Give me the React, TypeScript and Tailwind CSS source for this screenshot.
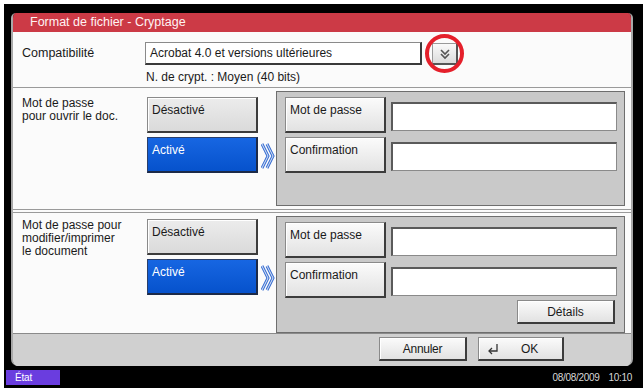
import React from "react";

const font = { fontFamily: '"Liberation Sans", Arial, sans-serif' };

function Btn3D({ label, className = "", center = false, blue = false }: { label: React.ReactNode; className?: string; center?: boolean; blue?: boolean }) {
  const base = blue
    ? "bg-linear-to-b from-[#1766e2] to-[#0652cc] text-white border border-[#2a3f6a] border-b-[2px] border-r-[2px] border-b-[#1c2a48] border-r-[#1c2a48]"
    : "bg-linear-to-b from-[#fbfbfb] to-[#e2e2e2] text-[#1a1a1a] border border-[#8a8a8a] border-b-[2px] border-r-[2px] border-b-[#3c3c3c] border-r-[#3c3c3c] shadow-[inset_1px_1px_0_#ffffff]";
  return (
    <div className={`${base} ${className} flex ${center ? "items-center justify-center" : "items-start pl-[4px] pt-[5px]"} text-[12px] leading-[14px]`}>
      {label}
    </div>
  );
}

function Input({ className = "" }: { className?: string }) {
  return <div className={`bg-white border border-[#8a8a8a] border-t-[2px] border-l-[2px] border-t-[#5a5a5a] border-l-[#5a5a5a] ${className}`} />;
}

function Chevrons() {
  return (
    <svg width="14" height="30" viewBox="0 0 14 30">
      <polyline points="1,3 7,15 1,27" fill="none" stroke="#3a6fd2" strokeWidth="3" />
      <polyline points="1,3 7,15 1,27" fill="none" stroke="#dbe6f8" strokeWidth="1" />
      <polyline points="6,3 12,15 6,27" fill="none" stroke="#3a6fd2" strokeWidth="3" />
      <polyline points="6,3 12,15 6,27" fill="none" stroke="#dbe6f8" strokeWidth="1" />
    </svg>
  );
}

function Section({ labelLines, children, panelH, buttonsTop }: { labelLines: string[]; children: React.ReactNode; panelH: string; buttonsTop: string }) {
  return (
    <div className="flex">
      <div className={`w-[134px] pl-[9px] ${buttonsTop} text-[12px] leading-[13px] text-[#1a1a1a]`}>
        {labelLines.map((l) => (
          <div key={l}>{l}</div>
        ))}
      </div>
      <div className={`w-[111px] flex flex-col gap-[4px] ${buttonsTop}`}>
        <Btn3D label="Désactivé" className="h-[36px] !from-[#ececec] !to-[#dadada]" />
        <Btn3D label="Activé" blue className="h-[36px]" />
      </div>
      <div className={`w-[18px] flex justify-center ${buttonsTop}`}>
        <div className="mt-[44px] ml-[2px]">
          <Chevrons />
        </div>
      </div>
      <div className={`w-[349px] ${panelH} mt-[3px] bg-[#c9c9c9] border border-[#6e6e6e] pl-[8px] pt-[5px] flex flex-col gap-[4px]`}>
        {children}
      </div>
    </div>
  );
}

function PwRow({ label }: { label: string }) {
  return (
    <div className="flex">
      <Btn3D label={label} className="w-[101px] h-[36px]" />
      <Input className="ml-[5px] mt-[5px] w-[226px] h-[29px]" />
    </div>
  );
}

export default function App() {
  return (
    <div className="w-[643px] h-[392px] bg-white pt-[4px] pl-[4px] pb-[4px] flex flex-col" style={font}>
      <div className="flex-1 bg-black flex flex-col">
        <div className="ml-[7px] mt-[9px] w-[622px] h-[353px] flex flex-col border-x-2 border-[#a8a8a8] rounded-t-[5px] rounded-b-[7px] overflow-hidden">
          <div className="h-[19px] bg-[#cc3a46] text-[#fff3f3] text-[12.5px] leading-[19px] pl-[17px] shrink-0">
            Format de fichier - Cryptage
          </div>
          <div className="flex-1 bg-[#fbfbfb] flex flex-col">
            <div className="h-[56px] border-b border-[#9a9a9a] shrink-0">
              <div className="flex pt-[10px]">
                <div className="w-[132px] pl-[9px] pt-[4px] text-[12.5px] leading-[14px] text-[#1a1a1a]">Compatibilité</div>
                <div className="w-[277px] h-[23px] bg-white border border-[#8a8a8a] border-b-[2px] border-r-[2px] border-b-[#3a3a3a] border-r-[#3a3a3a] text-[12px] leading-[20px] pl-[4px] text-[#1a1a1a]">
                  Acrobat 4.0 et versions ultérieures
                </div>
                <div className="relative ml-[10px] mt-[1px]">
                  <div className="w-[26px] h-[22px] bg-linear-to-b from-[#fafafa] to-[#dcdcdc] border border-[#999] border-b-[2px] border-r-[2px] border-b-[#555] border-r-[#555] flex items-center justify-center">
                    <svg width="12" height="12" viewBox="0 0 12 12">
                      <polyline points="2,2 6,6 10,2" fill="none" stroke="#555" strokeWidth="1.6" />
                      <polyline points="2,6 6,10 10,6" fill="none" stroke="#555" strokeWidth="1.6" />
                    </svg>
                  </div>
                  <div className="absolute left-[-7px] top-[-9px] w-[39px] h-[39px] rounded-full border-[4px] border-[#e5202b]" />
                </div>
              </div>
              <div className="pl-[133px] mt-[5px] text-[12px] leading-[14px] text-[#1a1a1a]">N. de crypt. : Moyen (40 bits)</div>
            </div>
            <div className="h-[122px] shrink-0 border-b border-[#9a9a9a]">
              <Section labelLines={["Mot de passe", "pour ouvrir le doc."]} panelH="h-[115px]" buttonsTop="pt-[9px]">
                <PwRow label="Mot de passe" />
                <PwRow label="Confirmation" />
              </Section>
            </div>
            <div className="h-[3px] border-b border-[#9a9a9a] shrink-0" />
            <div className="flex-1">
              <Section labelLines={["Mot de passe pour", "modifier/imprimer", "le document"]} panelH="h-[117px]" buttonsTop="pt-[6px]">
                <PwRow label="Mot de passe" />
                <PwRow label="Confirmation" />
                <div className="flex justify-end pr-[9px] -mt-[2px]">
                  <Btn3D label="Détails" center className="w-[98px] h-[24px]" />
                </div>
              </Section>
            </div>
            <div className="h-[33px] bg-[#d0d0d0] border-t border-[#8a8a8a] shrink-0 flex items-start justify-end pt-[3px] pr-[67px] gap-[11px]">
              <Btn3D label={<span className="tracking-[-0.3px]">Annuler</span>} center className="w-[88px] h-[24px]" />
              <div className="w-[86px] h-[24px] bg-linear-to-b from-[#fbfbfb] to-[#e2e2e2] border border-[#8a8a8a] border-b-[2px] border-r-[2px] border-b-[#3c3c3c] border-r-[#3c3c3c] flex items-center text-[12px] text-[#1a1a1a] shadow-[inset_1px_1px_0_#ffffff]">
                <svg width="14" height="12" viewBox="0 0 14 12" className="ml-[7px]">
                  <polyline points="11,1 11,8 3,8" fill="none" stroke="#333" strokeWidth="1.3" />
                  <polyline points="6,5 3,8 6,11" fill="none" stroke="#333" strokeWidth="1.3" />
                </svg>
                <span className="ml-[21px]">OK</span>
              </div>
            </div>
          </div>
        </div>
        <div className="flex-1 flex items-center justify-between pl-[2px] pr-[11px]">
          <div className="w-[54px] h-[15px] bg-[#6a3ddf] text-white text-[10px] leading-[15px] pl-[9px] tracking-[-0.2px]">État</div>
          <div className="text-[10px] text-[#d8d8d8] flex gap-[9px] tracking-[-0.3px]">
            <span>08/08/2009</span>
            <span>10:10</span>
          </div>
        </div>
      </div>
    </div>
  );
}
